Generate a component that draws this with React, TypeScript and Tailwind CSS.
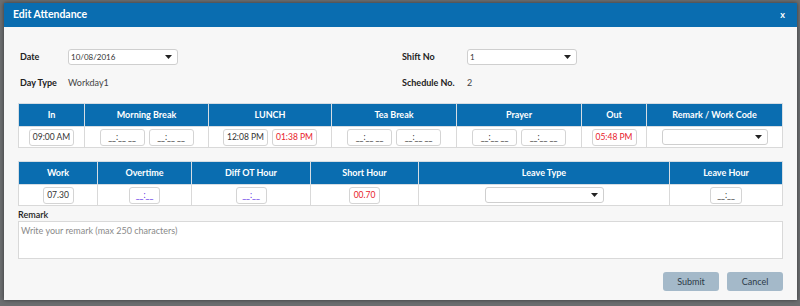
import React from "react";

const font = "font-['Lato','Liberation_Sans',sans-serif]";

function Caret() {
    return (
        <svg className="w-[7px] h-[4px]" viewBox="0 0 7 4">
            <path d="M0 0h7L3.5 4z" fill="#222" />
        </svg>
    );
}

function Select({ value, w }: { value?: string; w: string }) {
    return (
        <div className={`${w} h-[16px] bg-white border border-[#cfcfcf] rounded-[3px] flex items-center justify-between pl-[2px] pr-[5px] text-[8px] text-[#333]`}>
            <span>{value}</span>
            <Caret />
        </div>
    );
}

function TimeBox({ value, red, purple, w = "w-[45px]" }: { value?: string; red?: boolean; purple?: boolean; w?: string }) {
    const color = red ? "text-[#e8202a]" : purple ? "text-[#5a2be6]" : "text-[#333]";
    return (
        <div className={`${w} h-[17px] bg-white border border-[#d4d4d4] rounded-[3px] flex items-center justify-center text-[8.5px] ${color}`}>
            {value ?? "__:__ __"}
        </div>
    );
}

const th = "bg-[#0a6db0] text-white font-bold text-[9px] h-[23px] border border-[#d6dde3] text-center p-0";
const td = "h-[21px] border border-[#d9d9d9] bg-white p-0";

export default function App() {
    return (
        <div className={`w-[800px] h-[306px] bg-[#6c6e70] pt-[3px] pl-[4px] overflow-hidden ${font}`}>
            <div className="w-[793px] h-[297px] bg-[#f7f7f7] shadow-[0_0_4px_rgba(0,0,0,0.5)] flex flex-col">
                {/* Header */}
                <div className="h-[24px] bg-[#0a6db0] flex items-center justify-between pl-[9px] pr-[12px]">
                    <span className="text-white font-bold text-[10.5px]">Edit Attendance</span>
                    <span className="text-white font-bold text-[9px]">x</span>
                </div>

                <div className="px-[14px] pt-[22px]">
                    {/* Top fields */}
                    <div className="flex pl-[2px]">
                        <div className="w-[382px] flex flex-col gap-[10px]">
                            <div className="flex items-center h-[16px]">
                                <span className="w-[48px] font-bold text-[9px] text-[#222]">Date</span>
                                <Select value="10/08/2016" w="w-[110px]" />
                            </div>
                            <div className="flex items-center h-[16px]">
                                <span className="w-[48px] font-bold text-[9px] text-[#222]">Day Type</span>
                                <span className="text-[9px] text-[#444]">Workday1</span>
                            </div>
                        </div>
                        <div className="flex flex-col gap-[10px]">
                            <div className="flex items-center h-[16px]">
                                <span className="w-[65px] font-bold text-[9px] text-[#222]">Shift No</span>
                                <Select value="1" w="w-[110px]" />
                            </div>
                            <div className="flex items-center h-[16px]">
                                <span className="w-[65px] font-bold text-[9px] text-[#222]">Schedule No.</span>
                                <span className="text-[9px] text-[#444]">2</span>
                            </div>
                        </div>
                    </div>

                    {/* Table 1 */}
                    <table className="mt-[12px] w-[764px] table-fixed border-collapse">
                        <colgroup>
                            <col className="w-[66px]" />
                            <col className="w-[124px]" />
                            <col className="w-[123px]" />
                            <col className="w-[125px]" />
                            <col className="w-[125px]" />
                            <col className="w-[65px]" />
                            <col className="w-[136px]" />
                        </colgroup>
                        <thead>
                            <tr>
                                <th className={th}>In</th>
                                <th className={th}>Morning Break</th>
                                <th className={th}>LUNCH</th>
                                <th className={th}>Tea Break</th>
                                <th className={th}>Prayer</th>
                                <th className={th}>Out</th>
                                <th className={th}>Remark / Work Code</th>
                            </tr>
                        </thead>
                        <tbody>
                            <tr>
                                <td className={td}>
                                    <div className="flex justify-center"><TimeBox value="09:00 AM" /></div>
                                </td>
                                <td className={td}>
                                    <div className="flex justify-center gap-[4px]"><TimeBox /><TimeBox /></div>
                                </td>
                                <td className={td}>
                                    <div className="flex justify-center gap-[4px]"><TimeBox value="12:08 PM" /><TimeBox value="01:38 PM" red /></div>
                                </td>
                                <td className={td}>
                                    <div className="flex justify-center gap-[4px]"><TimeBox /><TimeBox /></div>
                                </td>
                                <td className={td}>
                                    <div className="flex justify-center gap-[4px]"><TimeBox /><TimeBox /></div>
                                </td>
                                <td className={td}>
                                    <div className="flex justify-center"><TimeBox value="05:48 PM" red /></div>
                                </td>
                                <td className={td}>
                                    <div className="flex justify-center"><Select w="w-[106px]" /></div>
                                </td>
                            </tr>
                        </tbody>
                    </table>

                    {/* Table 2 */}
                    <table className="mt-[13px] w-[764px] table-fixed border-collapse">
                        <colgroup>
                            <col className="w-[79px]" />
                            <col className="w-[94px]" />
                            <col className="w-[119px]" />
                            <col className="w-[108px]" />
                            <col className="w-[251px]" />
                            <col className="w-[113px]" />
                        </colgroup>
                        <thead>
                            <tr>
                                <th className={th}>Work</th>
                                <th className={th}>Overtime</th>
                                <th className={th}>Diff OT Hour</th>
                                <th className={th}>Short Hour</th>
                                <th className={th}>Leave Type</th>
                                <th className={th}>Leave Hour</th>
                            </tr>
                        </thead>
                        <tbody>
                            <tr>
                                <td className={td}><div className="flex justify-center"><TimeBox value="07.30" w="w-[31px]" /></div></td>
                                <td className={td}><div className="flex justify-center"><TimeBox value="__:__" purple w="w-[31px]" /></div></td>
                                <td className={td}><div className="flex justify-center"><TimeBox value="__:__" purple w="w-[31px]" /></div></td>
                                <td className={td}><div className="flex justify-center"><TimeBox value="00.70" red w="w-[31px]" /></div></td>
                                <td className={td}><div className="flex justify-center"><Select w="w-[119px]" /></div></td>
                                <td className={td}><div className="flex justify-center"><TimeBox value="__:__" w="w-[32px]" /></div></td>
                            </tr>
                        </tbody>
                    </table>

                    {/* Remark */}
                    <div className="mt-[3px] text-[9px] font-semibold text-[#222] leading-[12px]">Remark</div>
                    <div className="w-[765px] h-[38px] bg-white border border-[#d9d9d9] px-[2px] pt-[2px] text-[9px] text-[#8a8a8a]">
                        Write your remark (max 250 characters)
                    </div>

                    {/* Buttons */}
                    <div className="mt-[13px] flex justify-end gap-[8px] w-[765px]">
                        <button className="w-[56px] h-[19px] rounded-[3px] bg-[#a4b9c9] text-[9px] text-[#2c3a48]">Submit</button>
                        <button className="w-[56px] h-[19px] rounded-[3px] bg-[#a4b9c9] text-[9px] text-[#2c3a48]">Cancel</button>
                    </div>
                </div>
            </div>
        </div>
    );
}
